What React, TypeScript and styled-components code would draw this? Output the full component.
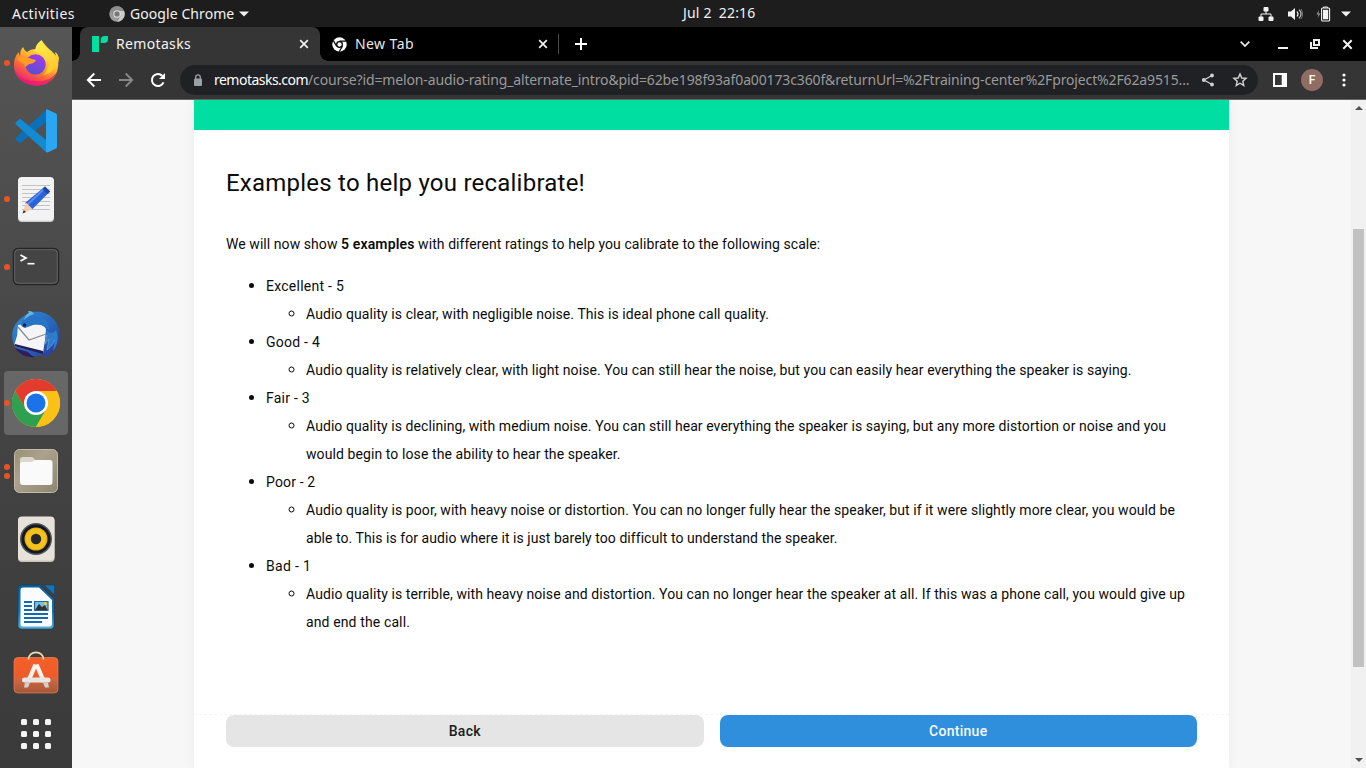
import React from "react";
import styled, { createGlobalStyle, css } from "styled-components";

const Global = createGlobalStyle`
  * { box-sizing: border-box; }
  html, body { margin: 0; padding: 0; overflow: hidden; }
  body { font-family: "Noto Sans", "Open Sans", sans-serif; font-size: 14px; }
  svg { display: block; flex: none; }
`;

const Desktop = styled.div`
  width: 1366px;
  height: 768px;
  display: flex;
  flex-direction: column;
  overflow: hidden;
`;

const Label = styled.span<{ $track?: number }>`
  letter-spacing: ${(p) => p.$track ?? 0}px;
  white-space: pre;
`;

/* ---------- system bar ---------- */
const SystemBar = styled.header`
  height: 27px;
  flex: none;
  display: grid;
  grid-template-columns: 671px auto 1fr;
  align-items: center;
  padding: 0 15px 0 12px;
  background: #1d1d1d;
  color: #f2f2f2;
  line-height: 26px;
`;
const SystemLeft = styled.div`
  display: flex;
  align-items: center;
`;
const AppMenu = styled.div`
  display: flex;
  align-items: center;
  margin-left: 34px;
  gap: 5px;
`;
const Clock = styled.div`
  display: flex;
  gap: 7px;
  padding-bottom: 1px;
`;
const SystemRight = styled.div`
  display: flex;
  align-items: center;
  justify-content: flex-end;
`;
const TrayIcon = styled.span<{ $gap?: number }>`
  margin-left: ${(p) => p.$gap ?? 12}px;
`;

/* ---------- dock ---------- */
const Workspace = styled.div`
  flex: 1;
  min-height: 0;
  display: flex;
`;
const Dock = styled.nav`
  width: 72px;
  flex: none;
  display: flex;
  flex-direction: column;
  align-items: center;
  gap: 4px;
  padding-top: 4px;
  background: linear-gradient(#555 0%, #4c4c4c 28%, #434343 55%, #3a3a3a 100%);
`;
const DockItem = styled.div<{ $active?: boolean; $raise?: number }>`
  width: 64px;
  height: 64px;
  flex: none;
  display: flex;
  align-items: center;
  justify-content: center;
  position: relative;
  border-radius: 4px;
  margin-top: ${(p) => -(p.$raise ?? 0)}px;
  ${(p) => p.$active && css`background: #676767;`}
`;
const Dots = styled.span`
  position: absolute;
  left: 0;
  top: 0;
  bottom: 0;
  display: flex;
  flex-direction: column;
  justify-content: center;
  gap: 3px;
`;
const Dot = styled.i`
  width: 6px;
  height: 6px;
  border-radius: 50%;
  background: #e95420;
`;

/* ---------- browser ---------- */
const Browser = styled.section`
  flex: 1;
  min-width: 0;
  display: flex;
  flex-direction: column;
`;
const TabStrip = styled.div`
  height: 34px;
  flex: none;
  display: flex;
  align-items: center;
  background: #000;
  padding: 0 13px 0 8px;
  color: #e8e8e8;
`;
const Tab = styled.div<{ $active?: boolean }>`
  width: 240px;
  height: 34px;
  display: flex;
  align-items: center;
  padding: 0 ${(p) => (p.$active ? 11 : 12)}px 0 12px;
  position: relative;
  ${(p) =>
    p.$active &&
    css`
      background: #353535;
      color: #f4f4f4;
      border-radius: 8px 8px 0 0;
      &::before, &::after {
        content: "";
        position: absolute;
        bottom: 0;
        width: 8px;
        height: 8px;
      }
      &::before { left: -8px; background: radial-gradient(circle at 0 0, #000 7.5px, #353535 8px); }
      &::after { right: -8px; background: radial-gradient(circle at 100% 0, #000 7.5px, #353535 8px); }
    `}
`;
const TabTitle = styled.div`
  flex: 1;
  margin-left: 8px;
  padding-bottom: 2px;
`;
const TabDivider = styled.i`
  width: 1px;
  height: 20px;
  background: #4c4c4c;
  margin: 0 16px 0 -2px;
`;
const WindowControls = styled.div`
  margin-left: auto;
  display: flex;
  align-items: center;
`;
const ControlSlot = styled.span<{ $gap?: number }>`
  margin-left: ${(p) => p.$gap ?? 0}px;
`;
const Toolbar = styled.div`
  height: 39px;
  flex: none;
  display: flex;
  align-items: center;
  padding: 0 14px;
  background: #353535;
  border-bottom: 1px solid #686464;
`;
const NavButtons = styled.div`
  display: flex;
  gap: 16px;
  margin-right: 14px;
`;
const Omnibox = styled.div`
  width: 1078px;
  height: 30px;
  border-radius: 15px;
  background: #202124;
  display: flex;
  align-items: center;
  padding: 0 10px 0 13px;
`;
const Url = styled.div`
  flex: 1;
  display: flex;
  margin-left: 11px;
  color: #9a9a9a;
  line-height: 28px;
`;
const Domain = styled(Label)`
  color: #fff;
`;
const OmniActions = styled.div`
  display: flex;
  align-items: center;
  gap: 17px;
`;
const ToolbarEnd = styled.div`
  display: flex;
  align-items: center;
  margin-left: 15px;
`;
const Avatar = styled.div`
  width: 22px;
  height: 22px;
  margin: 0 19px 0 14px;
  border-radius: 50%;
  background: #8f6d62;
  color: #fff;
  font: 500 12px/22px Roboto, sans-serif;
  text-align: center;
`;

/* ---------- page ---------- */
const Viewport = styled.div`
  flex: 1;
  min-height: 0;
  display: flex;
  background: #f7f7f7;
`;
const PageArea = styled.div`
  flex: 1;
  display: flex;
  padding: 0 122px;
  overflow: hidden;
`;
const Card = styled.main`
  flex: 1;
  display: flex;
  flex-direction: column;
  background: #fff;
  box-shadow: 0 0 12px rgba(0, 0, 0, 0.05);
  color: #0b0b0b;
  font-family: Roboto, "Liberation Sans", sans-serif;
`;
const Banner = styled.div`
  height: 30px;
  background: #00dea1;
`;
const Content = styled.article`
  height: 584px;
  padding: 35px 32px 0;
  line-height: 28px;
`;
const Title = styled.h1`
  margin: 0 0 29px;
  font-size: 24px;
  font-weight: 400;
  line-height: 36px;
  letter-spacing: 0.23px;
`;
const Intro = styled.p`
  margin: 0 0 14px;
  b { font-weight: 600; }
`;
const RatingList = styled.ul`
  margin: 0;
  padding-left: 40px;
  list-style: disc;
  > li::marker { font-size: 16px; }
`;
const DetailList = styled(RatingList)`
  list-style: circle;
`;
const Line = styled(Label)`
  display: block;
`;
const Footer = styled.footer`
  flex: 1;
  display: flex;
  align-items: flex-start;
  gap: 16px;
  padding: 0 32px;
  border-top: 1px dashed #f5f5f5;
`;
const Button = styled.button<{ $primary?: boolean }>`
  flex: 1;
  height: 32px;
  padding: 0;
  border: 0;
  border-radius: 8px;
  font: 500 14px/32px Roboto, sans-serif;
  letter-spacing: 0.28px;
  background: ${(p) => (p.$primary ? "#2f8fdd" : "#e5e5e5")};
  color: ${(p) => (p.$primary ? "#f5faff" : "#1c1c1c")};
`;
const Scrollbar = styled.aside`
  width: 15px;
  display: flex;
  flex-direction: column;
  align-items: center;
  background: #f1f1f1;
  padding: 6px 0;
`;
const Thumb = styled.i`
  width: 11px;
  height: 438px;
  margin: 119px 0 auto;
  background: #c1c1c1;
`;

/* ---------- dock drawings ---------- */
const Firefox = () => (
  <svg width="48" height="48" viewBox="0 0 48 48">
    <defs>
      <linearGradient id="ffBody" x1="0.85" y1="0.1" x2="0.25" y2="1">
        <stop offset="0" stopColor="#fff14a" /><stop offset=".35" stopColor="#ffb52a" />
        <stop offset=".62" stopColor="#ff6a34" /><stop offset="1" stopColor="#e61587" />
      </linearGradient>
      <linearGradient id="ffGlobe" x1="0.7" y1="0" x2="0.3" y2="1">
        <stop offset="0" stopColor="#a33bea" /><stop offset="1" stopColor="#5550d0" />
      </linearGradient>
      <linearGradient id="ffFlame" x1="0" y1="0" x2="0.5" y2="1">
        <stop offset="0" stopColor="#fff250" /><stop offset="1" stopColor="#ffc72d" />
      </linearGradient>
    </defs>
    <path d="M11 8c1 2 2 4 4 5 4-3 9-4 13-2 8 0 15 3 18 9 2 16-7 26-21 26.500C11 46 2 38 2 26c0-6 2-10 5-13 0 2 0 3 1 4 0-4 1-7 3-9z" fill="url(#ffBody)" />
    <circle cx="23.500" cy="25.500" r="10.200" fill="url(#ffGlobe)" />
    <path d="M29.500 1c-4 3-7 7-6 12 5 1 9 5 10 9l3-1c1 5-1 11-5 15 8-1 15-8 15.500-17-1-3-2-5-4-6 0 1 1 3 1 4-3-5-9-7-14.500-16z" fill="url(#ffFlame)" />
    <path d="M5 20c4-3 9-2 12-1 2 1 4 1 7 2-1 3-5 4-7 4-1 1-2 2-4 3 0-4-4-4-8-8z" fill="#ff9c26" />
    <path d="M3 31c3 10 12 15.500 22 15.500 9 0 17-5.500 20-13.500-6 8-14 10-21 9C14 42 6 38 3 31z" fill="#f21674" opacity=".75" />
  </svg>
);
const VsCode = () => (
  <svg width="44" height="44" viewBox="0 0 44 44">
    <path d="M32 1v12L7 33.500c-.8.600-1.500.5-2 0l-3-2.700c-.8-.8-.8-1.600 0-2.400z" fill="#0b70b8" />
    <path d="M32 43V31L7 10.500c-.8-.6-1.500-.5-2 0l-3 2.700c-.8.800-.8 1.600 0 2.400z" fill="#128bd4" />
    <path d="M32 1c.6-.5 1.300-.5 2-.2l8 3.800c.7.400 1 .9 1 1.700v31.400c0 .8-.3 1.300-1 1.700l-8 3.800c-.7.300-1.400.3-2-.2z" fill="#2aa7f2" />
  </svg>
);
const TextEditor = () => (
  <svg width="48" height="48" viewBox="0 0 48 48">
    <rect x="6" y="3" width="36" height="44" rx="4" fill="#d0d0d0" />
    <rect x="6" y="2" width="36" height="43.500" rx="4" fill="#f3f3f3" />
    <path d="M10 10.500h28M10 14.500h28M10 18.500h28M10 22.500h28M10 26.500h28M10 30.500h28M10 34.500h28" stroke="#c3c3c3" />
    <path d="M33 11.500l5 5-18 18-7-6.500z" fill="#2a62d8" />
    <path d="M31.500 14.500L15 30" stroke="#5a8cf0" strokeWidth="2" />
    <path d="M33 11.500l5 5-2.500 2.600-5.100-5z" fill="#1c46a8" />
    <path d="M14 27.500l6.500 6.500-10 4.500z" fill="#f0ceb0" /><path d="M11.800 35l2.200 2-3.500 1.500z" fill="#333" />
  </svg>
);
const Terminal = () => (
  <svg width="48" height="48" viewBox="0 0 48 48">
    <rect x="1.500" y="5.500" width="45" height="36" rx="4.500" fill="#444" stroke="#262626" strokeWidth="1.500" />
    <rect x="2.700" y="6.700" width="42.600" height="33.600" rx="3.500" fill="none" stroke="#6b6b6b" strokeWidth=".8" />
    <path d="M8.500 12l5.500 3-5.500 3" fill="none" stroke="#fff" strokeWidth="1.700" /><path d="M15.500 20.700h7" stroke="#fff" strokeWidth="1.600" />
  </svg>
);
const Thunderbird = () => (
  <svg width="50" height="50" viewBox="0 0 50 50">
    <defs><linearGradient id="tb" x1="0" y1="0" x2="1" y2="1"><stop offset="0" stopColor="#2f8fd6" /><stop offset=".55" stopColor="#2766bd" /><stop offset="1" stopColor="#2a3190" /></linearGradient></defs>
    <path d="M17 1c2 0 4 0 5 1 12-2 24 6 26 18 1 6 1 14-4 19-3 4-7 8-12 9l3-4c-11 4-23 2-29-5C0 33 0 22 4 15c3-5 8-9 14-12z" fill="url(#tb)" />
    <path d="M4 38c5 7 12 10 20 9-3-1-5-3-7-5z" fill="#311c62" />
    <path d="M7 15l9-1c7-2 15-1 19 5l-1 11-2 13L3 36c1-4 2-7 3-10z" fill="#f5f5f7" />
    <path d="M7 17l11 13 17-6" fill="none" stroke="#888b96" strokeWidth="1.200" />
    <path d="M3 36l29 8v-3L4 34z" fill="#251d55" />
    <path d="M10 14c2-5 8-9 16-8 8 1 12 6 12 14-4-5-9-6-16-5l-8 3c-3-1-4-2-4-4z" fill="#2874c7" />
    <path d="M17 1c3 0 5 1 6 3-4 1-7 3-10 6 1-3 2-6 5-7z" fill="#6ab5df" />
    <circle cx="13.500" cy="15" r="1.700" fill="#1b2038" />
    <path d="M36 20c-1 7-2 9-2 14l4-5-2 11c4-3 6-6 8-10l-2 11c5-7 6-14 3-21-3 4-7 4-9 0z" fill="#2f7ccb" />
    <path d="M36 25l-2 9 4-5-2 11c4-3 6-6 8-10" fill="none" stroke="#65a6df" strokeWidth=".7" />
  </svg>
);
const ChromeLogo = () => (
  <svg width="48" height="48" viewBox="0 0 48 48">
    <circle cx="24" cy="24" r="24" fill="#fbc116" />
    <path d="M3.200 12A24 24 0 0 1 44.800 12H24z" fill="#e33b2e" />
    <path d="M3.200 12A24 24 0 0 0 24 48l10.400-18L24 24l-10.400 6z" fill="#2ea04f" />
    <path d="M3.200 12H24v12l-10.400 6z" fill="#e33b2e" />
    <path d="M24 24V12h20.800A24 24 0 0 1 24 48l10.400-18z" fill="#fbc116" />
    <circle cx="24" cy="24" r="12" fill="#fff" /><circle cx="24" cy="24" r="9.500" fill="#1a73e8" />
  </svg>
);
const Files = () => (
  <svg width="46" height="46" viewBox="0 0 46 46">
    <defs><linearGradient id="fl" x1="0" y1="0" x2="1" y2="1"><stop offset="0" stopColor="#989078" /><stop offset=".4" stopColor="#aaa28c" /><stop offset="1" stopColor="#8e866f" /></linearGradient></defs>
    <rect x="1.500" y="1.500" width="43" height="43" rx="5" fill="url(#fl)" stroke="#c2bba6" />
    <path d="M7 12c0-2 1-3 3-3h8c2 0 3 1 4 3v4H7z" fill="#dcd8cc" />
    <path d="M7 16c0-1 1-2 3-2h8c2 0 3-2 5-2h14c1.500 0 2.500 1 2.500 2.500V34c0 2-1 3-3 3H10c-2 0-3-1-3-3z" fill="#fafafa" />
  </svg>
);
const Rhythmbox = () => (
  <svg width="48" height="48" viewBox="0 0 48 48">
    <rect x="6" y="2" width="36.500" height="45" rx="4" fill="#c8c3b9" /><rect x="6" y="1.500" width="36.500" height="44" rx="4" fill="#e6e2da" />
    <circle cx="24" cy="24" r="16" fill="#50545c" /><circle cx="24" cy="24" r="14.500" fill="#15191f" />
    <circle cx="24" cy="24" r="11.500" fill="#dfa913" /><circle cx="24" cy="24" r="10.500" fill="#f3c21c" /><circle cx="24" cy="24" r="5.200" fill="#25282c" />
  </svg>
);
const Writer = () => (
  <svg width="48" height="48" viewBox="0 0 48 48">
    <defs><linearGradient id="wr" x1="0" y1="0" x2="0" y2="1"><stop offset="0" stopColor="#0c5d98" /><stop offset=".6" stopColor="#1976b3" /><stop offset="1" stopColor="#58b1da" /></linearGradient></defs>
    <path d="M10 2h18l14 14v26c0 2-1 4-4 4H10c-3 0-4-2-4-4V6c0-3 1-4 4-4z" fill="url(#wr)" stroke="#0b4165" strokeWidth=".6" />
    <path d="M11 4.500h16L40 17v24c0 1.500-1 2.500-2.500 2.500h-27C9 43.500 8.500 42.500 8.500 41V7c0-1.500 1-2.500 2.500-2.500z" fill="#fafcff" />
    <path d="M32 2h10.500v10z" fill="#1574b4" stroke="#0b4165" strokeWidth=".6" />
    <path d="M12 19h8M12 23h8M12 27h8M12 31h24M12 35h24M12 39h18" stroke="#146ba7" strokeWidth="2" />
    <path d="M22.500 18.500h13.500v9H22.500z" fill="#78bde6" stroke="#146ba7" strokeWidth="1.200" /><path d="M23 27l4-6 3 3 3-2 2.500 5z" fill="#333" /><circle cx="33.500" cy="20.500" r="1.500" fill="#f6c820" />
  </svg>
);
const Software = () => (
  <svg width="48" height="48" viewBox="0 0 48 48">
    <defs><linearGradient id="sw" x1="0" y1="0" x2="0" y2="1"><stop offset="0" stopColor="#f4602a" /><stop offset=".55" stopColor="#ed5b27" /><stop offset=".6" stopColor="#d1683f" /><stop offset="1" stopColor="#a65638" /></linearGradient></defs>
    <rect x="2" y="6.500" width="44" height="35.500" rx="4" fill="url(#sw)" stroke="#f58b62" strokeWidth=".6" />
    <path d="M16.500 8.500c0-9.500 15-9.500 15 0" fill="none" stroke="#f3dcae" strokeWidth="1.800" />
    <path d="M23.500 13.500L16 31M24.500 13.500L32 31" stroke="#fbf3ef" strokeWidth="4.300" fill="none" />
    <rect x="10" y="26.500" width="28.500" height="5" rx="2.500" fill="#e9e5e3" />
    <path d="M13 31.500h5l-2 5h-4zM31 31.500h5l1 5h-4z" fill="#d5cecb" />
  </svg>
);
const AppGrid = () => (
  <svg width="32" height="32" viewBox="0 0 32 32" fill="#f4f4f4">
    {[1, 13, 25].map((y) => [1, 13, 25].map((x) => <rect key={`${x}-${y}`} x={x} y={y} width="6" height="6" rx="1.500" />))}
  </svg>
);

/* ---------- small icons ---------- */
const ChromeMono = ({ size, dim }: { size: number; dim?: boolean }) => {
  const ink = dim ? "#1d1d1d" : "#000";
  return (
    <svg width={size} height={size} viewBox="0 0 16 16">
      <circle cx="8" cy="8" r="7.700" fill={dim ? "#9c9c9c" : "#fff"} />
      {dim && <path d="M1.300 4.200A7.700 7.700 0 0 1 14.700 4.200L8 8z" fill="#8c8c8c" />}
      {dim && <path d="M8 4.500h6.900A7.700 7.700 0 0 1 8 15.700L11 9.800z" fill="#c9c9c9" />}
      <path d="M8 4.400h6.900M4.900 9.800L1.500 3.900M11.100 9.800L7.700 15.700" stroke={dim ? "#777" : ink} strokeWidth={dim ? 0.6 : 1.3} />
      <circle cx="8" cy="8" r="3.700" fill={dim ? "#e4e4e4" : ink} />
      <circle cx="8" cy="8" r={dim ? 2.7 : 2.3} fill={dim ? "#7a7a7a" : "#fff"} />
    </svg>
  );
};
const Caret = () => <svg width="10" height="6" viewBox="0 0 10 6"><path d="M0 .5h10L5 5.500z" fill="#f2f2f2" /></svg>;
const Network = () => (
  <svg width="16" height="14" viewBox="0 0 16 14" fill="#f2f2f2">
    <rect x="5.500" width="5" height="4.500" rx="1" /><rect x=".5" y="9.500" width="5" height="4.500" rx="1" /><rect x="10.500" y="9.500" width="5" height="4.500" rx="1" />
    <path d="M8 4v3M3 10V7h10v3" fill="none" stroke="#f2f2f2" />
  </svg>
);
const Volume = () => (
  <svg width="16" height="14" viewBox="0 0 16 14">
    <path d="M0 4.500h3L7 1v12L3 9.500H0z" fill="#f2f2f2" />
    <path d="M9 4.500c1.200 1.500 1.200 3.500 0 5" fill="none" stroke="#f2f2f2" strokeWidth="1.200" /><path d="M11 2.700c2.500 2.600 2.500 6 0 8.600" fill="none" stroke="#bdbdbd" strokeWidth="1.200" />
    <path d="M13 2c2 3 2 7 0 10" fill="none" stroke="#777" />
  </svg>
);
const Battery = () => (
  <svg width="15" height="16" viewBox="0 0 15 16">
    <path d="M3 4L.5 8.500H2.500L1.500 12 4.500 7.500H2.500z" fill="#999" />
    <path d="M7.500 2V1h4v1" stroke="#f2f2f2" fill="none" /><rect x="5.600" y="2" width="8" height="13" rx="1" fill="none" stroke="#f2f2f2" strokeWidth="1.100" /><rect x="7" y="3.800" width="5.200" height="9.500" fill="#f2f2f2" />
  </svg>
);
const Cross = ({ size, weight = 1.7 }: { size: number; weight?: number }) => (
  <svg width={size} height={size} viewBox="0 0 10 10"><path d="M1.200 1.200l7.600 7.600M8.800 1.200L1.200 8.800" stroke="#f2f2f2" strokeWidth={weight} /></svg>
);
const RemotasksMark = () => (
  <svg width="16" height="16" viewBox="0 0 16 16" fill="#00dfa2"><path d="M0 0h7v16H0zM8.700 7V4a4 4 0 0 1 4-4H16v3a4 4 0 0 1-4 4z" /></svg>
);
const Arrow = ({ back }: { back?: boolean }) => (
  <svg width="16" height="16" viewBox="0 0 16 16" fill="none" stroke={back ? "#fff" : "#868686"} strokeWidth="1.900">
    <path d={back ? "M15 8H2.500M8.300 1.500L1.800 8l6.500 6.500" : "M1 8h12.500M7.700 1.500L14.200 8l-6.500 6.500"} />
  </svg>
);
const Reload = () => (
  <svg width="16" height="16" viewBox="0 0 16 16"><path d="M13.500 10.300A6 6 0 1 1 12.400 4" fill="none" stroke="#fff" strokeWidth="2" /><path d="M15 1v6H9z" fill="#fff" /></svg>
);
const Lock = () => (
  <svg width="10" height="13" viewBox="0 0 10 13"><rect x="1" y="4.500" width="8" height="7.500" rx="1" fill="#9aa0a6" /><path d="M2.700 5V3.200a2.300 2.300 0 0 1 4.600 0V5" fill="none" stroke="#9aa0a6" strokeWidth="1.300" /></svg>
);
const Share = () => (
  <svg width="14" height="14" viewBox="0 0 14 14" fill="#cfcfcf"><path d="M11 2.500L3 7l8 4.500" fill="none" stroke="#cfcfcf" strokeWidth="1.300" /><circle cx="11" cy="2.500" r="1.900" /><circle cx="2.800" cy="7" r="1.900" /><circle cx="11" cy="11.500" r="1.900" /></svg>
);
const Star = () => (
  <svg width="16" height="16" viewBox="0 0 16 16"><path d="M8 2l1.750 4 4.300.4-3.250 2.850.97 4.250L8 11.250 4.230 13.500l.97-4.250L1.950 6.400l4.300-.4z" fill="none" stroke="#d4d4d4" strokeWidth="1.400" /></svg>
);
const SidePanel = () => (
  <svg width="14" height="14" viewBox="0 0 14 14"><path fillRule="evenodd" d="M0 0h14v14H0zM2 2v10h6.700V2z" fill="#fff" /></svg>
);
const Kebab = () => (
  <svg width="4" height="14" viewBox="0 0 4 14" fill="#fff"><circle cx="2" cy="2" r="1.600" /><circle cx="2" cy="7" r="1.600" /><circle cx="2" cy="12" r="1.600" /></svg>
);

const dock: { icon: React.ReactNode; dots?: number; active?: boolean; raise?: number }[] = [
  { icon: <Firefox />, dots: 1 },
  { icon: <VsCode /> },
  { icon: <TextEditor />, dots: 1 },
  { icon: <Terminal />, dots: 1 },
  { icon: <Thunderbird /> },
  { icon: <ChromeLogo />, dots: 1, active: true },
  { icon: <Files />, dots: 2 },
  { icon: <Rhythmbox /> },
  { icon: <Writer /> },
  { icon: <Software /> },
  { icon: <AppGrid />, raise: 9 },
];

type TextLine = { text: string; track: number };
const ratings: { name: TextLine; lines: TextLine[] }[] = [
  { name: { text: "Excellent - 5", track: 0.25 }, lines: [{ text: "Audio quality is clear, with negligible noise. This is ideal phone call quality.", track: 0.074 }] },
  { name: { text: "Good - 4", track: 0.24 }, lines: [{ text: "Audio quality is relatively clear, with light noise. You can still hear the noise, but you can easily hear everything the speaker is saying.", track: 0.08 }] },
  {
    name: { text: "Fair - 3", track: 0.25 },
    lines: [
      { text: "Audio quality is declining, with medium noise. You can still hear everything the speaker is saying, but any more distortion or noise and you", track: 0.069 },
      { text: "would begin to lose the ability to hear the speaker.", track: 0.09 },
    ],
  },
  {
    name: { text: "Poor - 2", track: 0.15 },
    lines: [
      { text: "Audio quality is poor, with heavy noise or distortion. You can no longer fully hear the speaker, but if it were slightly more clear, you would be", track: 0.083 },
      { text: "able to. This is for audio where it is just barely too difficult to understand the speaker.", track: 0.053 },
    ],
  },
  {
    name: { text: "Bad - 1", track: 0.34 },
    lines: [
      { text: "Audio quality is terrible, with heavy noise and distortion. You can no longer hear the speaker at all. If this was a phone call, you would give up", track: 0.08 },
      { text: "and end the call.", track: 0.125 },
    ],
  },
];

export default function App() {
  return (
    <Desktop>
      <Global />
      <SystemBar>
        <SystemLeft>
          <Label $track={0.46}>Activities</Label>
          <AppMenu>
            <ChromeMono size={16} dim />
            <Label $track={0.08}>Google Chrome</Label>
            <Caret />
          </AppMenu>
        </SystemLeft>
        <Clock>
          <Label $track={0.2}>Jul 2</Label>
          <Label $track={0.2}>22:16</Label>
        </Clock>
        <SystemRight>
          <TrayIcon><Network /></TrayIcon>
          <TrayIcon $gap={14}><Volume /></TrayIcon>
          <TrayIcon $gap={12}><Battery /></TrayIcon>
          <TrayIcon $gap={10}><Caret /></TrayIcon>
        </SystemRight>
      </SystemBar>
      <Workspace>
        <Dock>
          {dock.map((d, i) => (
            <DockItem key={i} $active={d.active} $raise={d.raise}>
              {d.dots && <Dots>{Array.from({ length: d.dots }, (_, n) => <Dot key={n} />)}</Dots>}
              {d.icon}
            </DockItem>
          ))}
        </Dock>
        <Browser>
          <TabStrip>
            <Tab $active>
              <RemotasksMark />
              <TabTitle><Label $track={0.34}>Remotasks</Label></TabTitle>
              <Cross size={10} />
            </Tab>
            <Tab>
              <ChromeMono size={15} />
              <TabTitle><Label $track={0.42}>New Tab</Label></TabTitle>
              <Cross size={10} />
            </Tab>
            <TabDivider />
            <svg width="12" height="12" viewBox="0 0 12 12"><path d="M6 0v12M0 6h12" stroke="#fff" strokeWidth="2" /></svg>
            <WindowControls>
              <ControlSlot><svg width="10" height="6" viewBox="0 0 10 6"><path d="M.7.700L5 5 9.300.7" fill="none" stroke="#eee" strokeWidth="1.700" /></svg></ControlSlot>
              <ControlSlot $gap={28}><svg width="10" height="10" viewBox="0 0 10 10"><path d="M0 9h10" stroke="#eee" strokeWidth="2" /></svg></ControlSlot>
              <ControlSlot $gap={22}><svg width="10" height="10" viewBox="0 0 10 10"><path d="M4 1h5v5H4zM1 3v6h7" fill="none" stroke="#eee" strokeWidth="2" /></svg></ControlSlot>
              <ControlSlot $gap={22}><Cross size={11} weight={1.8} /></ControlSlot>
            </WindowControls>
          </TabStrip>
          <Toolbar>
            <NavButtons><Arrow back /><Arrow /><Reload /></NavButtons>
            <Omnibox>
              <Lock />
              <Url>
                <Domain $track={-0.52}>remotasks.com</Domain>
                <Label $track={-0.133}>/course?id=melon-audio-rating_alternate_intro&amp;pid=62be198f93af0a00173c360f&amp;returnUrl=%2Ftraining-center%2Fproject%2F62a9515...</Label>
              </Url>
              <OmniActions><Share /><Star /></OmniActions>
            </Omnibox>
            <ToolbarEnd><SidePanel /><Avatar>F</Avatar><Kebab /></ToolbarEnd>
          </Toolbar>
          <Viewport>
            <PageArea>
              <Card>
                <Banner />
                <Content>
                  <Title>Examples to help you recalibrate!</Title>
                  <Intro>
                    <Label $track={0.063}>We will now show </Label>
                    <b><Label $track={0.147}>5 examples</Label></b>
                    <Label $track={0.078}> with different ratings to help you calibrate to the following scale:</Label>
                  </Intro>
                  <RatingList>
                    {ratings.map((r) => (
                      <li key={r.name.text}>
                        <Line $track={r.name.track}>{r.name.text}</Line>
                        <DetailList>
                          <li>{r.lines.map((l) => <Line key={l.text} $track={l.track}>{l.text}</Line>)}</li>
                        </DetailList>
                      </li>
                    ))}
                  </RatingList>
                </Content>
                <Footer>
                  <Button>Back</Button>
                  <Button $primary>Continue</Button>
                </Footer>
              </Card>
            </PageArea>
            <Scrollbar>
              <svg width="8" height="4" viewBox="0 0 8 4"><path d="M4 0l4 4H0z" fill="#505050" /></svg>
              <Thumb />
              <svg width="8" height="4" viewBox="0 0 8 4"><path d="M4 4L0 0h8z" fill="#505050" /></svg>
            </Scrollbar>
          </Viewport>
        </Browser>
      </Workspace>
    </Desktop>
  );
}
